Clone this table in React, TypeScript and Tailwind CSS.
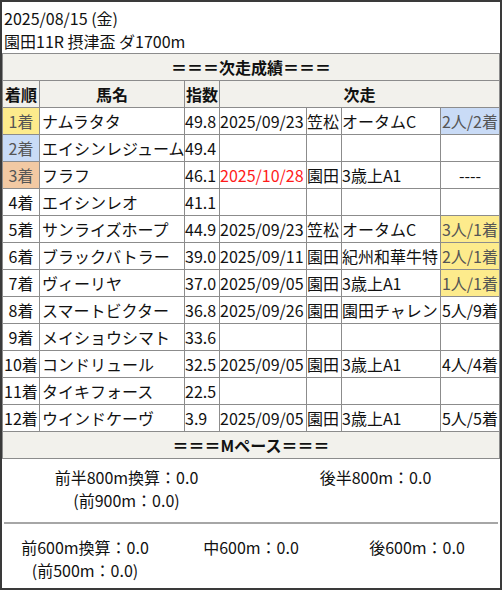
type Row = {
  rank: string;
  rankCls: string;
  name: string;
  idx: string;
  date: string;
  dateCls: string;
  place: string;
  race: string;
  res: string;
  resCls: string;
};

const rows: Row[] = [
  { rank: "1着", rankCls: "bg-[#fdeb8c] text-[#555]", name: "ナムラタタ", idx: "49.8", date: "2025/09/23", dateCls: "", place: "笠松", race: "オータムC", res: "2人/2着", resCls: "bg-[#c9dbf6] text-[#555]" },
  { rank: "2着", rankCls: "bg-[#c9dbf6] text-[#555]", name: "エイシンレジューム", idx: "49.4", date: "", dateCls: "", place: "", race: "", res: "", resCls: "" },
  { rank: "3着", rankCls: "bg-[#f2c9a3] text-[#555]", name: "フラフ", idx: "46.1", date: "2025/10/28", dateCls: "text-[#ff1a1a]", place: "園田", race: "3歳上A1", res: "----", resCls: "" },
  { rank: "4着", rankCls: "", name: "エイシンレオ", idx: "41.1", date: "", dateCls: "", place: "", race: "", res: "", resCls: "" },
  { rank: "5着", rankCls: "", name: "サンライズホープ", idx: "44.9", date: "2025/09/23", dateCls: "", place: "笠松", race: "オータムC", res: "3人/1着", resCls: "bg-[#fdeb8c] text-[#555]" },
  { rank: "6着", rankCls: "", name: "ブラックバトラー", idx: "39.0", date: "2025/09/11", dateCls: "", place: "園田", race: "紀州和華牛特", res: "2人/1着", resCls: "bg-[#fdeb8c] text-[#555]" },
  { rank: "7着", rankCls: "", name: "ヴィーリヤ", idx: "37.0", date: "2025/09/05", dateCls: "", place: "園田", race: "3歳上A1", res: "1人/1着", resCls: "bg-[#fdeb8c] text-[#555]" },
  { rank: "8着", rankCls: "", name: "スマートビクター", idx: "36.8", date: "2025/09/26", dateCls: "", place: "園田", race: "園田チャレン", res: "5人/9着", resCls: "" },
  { rank: "9着", rankCls: "", name: "メイショウシマト", idx: "33.6", date: "", dateCls: "", place: "", race: "", res: "", resCls: "" },
  { rank: "10着", rankCls: "", name: "コンドリュール", idx: "32.5", date: "2025/09/05", dateCls: "", place: "園田", race: "3歳上A1", res: "4人/4着", resCls: "" },
  { rank: "11着", rankCls: "", name: "タイキフォース", idx: "22.5", date: "", dateCls: "", place: "", race: "", res: "", resCls: "" },
  { rank: "12着", rankCls: "", name: "ウインドケーヴ", idx: "3.9", date: "2025/09/05", dateCls: "", place: "園田", race: "3歳上A1", res: "5人/5着", resCls: "" },
];

const cell = "border border-[#8c8c8c] p-0 h-[27px] leading-[26px] whitespace-nowrap overflow-hidden";

export default function App() {
  return (
    <div
      className="w-[502px] h-[590px] border-2 border-[#3a3a3a] bg-white text-[16px] text-[#111] overflow-hidden"
      style={{ fontFamily: '"Noto Sans CJK JP", "Noto Sans", sans-serif' }}
    >
      <div className="pt-[5px] pl-[2px] leading-[23px] h-[51px]">
        <div>2025/08/15 (金)</div>
        <div>園田11R 摂津盃 ダ1700m</div>
      </div>

      <table className="w-full table-fixed border-collapse">
        <colgroup>
          <col className="w-[37px]" />
          <col className="w-[145px]" />
          <col className="w-[35px]" />
          <col className="w-[87px]" />
          <col className="w-[35px]" />
          <col className="w-[99px]" />
          <col />
        </colgroup>
        <thead>
          <tr className="bg-[#f2f1ec] font-bold">
            <th colSpan={7} className={`${cell} text-center`}>＝＝＝次走成績＝＝＝</th>
          </tr>
          <tr className="bg-[#f2f1ec] font-bold">
            <th className={`${cell} text-center`}>着順</th>
            <th className={`${cell} text-center`}>馬名</th>
            <th className={`${cell} text-center`}>指数</th>
            <th colSpan={4} className={`${cell} text-center`}>次走</th>
          </tr>
        </thead>
        <tbody>
          {rows.map((r, i) => (
            <tr key={i}>
              <td className={`${cell} text-center ${r.rankCls}`}>{r.rank}</td>
              <td className={`${cell} pl-[2px]`}>{r.name}</td>
              <td className={`${cell}`}>{r.idx}</td>
              <td className={`${cell} ${r.dateCls}`}>{r.date}</td>
              <td className={`${cell}`}>{r.place}</td>
              <td className={`${cell}`}>{r.race}</td>
              <td className={`${cell} text-center ${r.resCls}`}>{r.res}</td>
            </tr>
          ))}
          <tr className="bg-[#f2f1ec] font-bold">
            <td colSpan={7} className={`${cell} text-center`}>＝＝＝Mペース＝＝＝</td>
          </tr>
        </tbody>
      </table>

      <div className="grid grid-cols-2 text-center leading-[23px] pt-[7px] pb-[10px]">
        <div>
          <div>前半800m換算：0.0</div>
          <div>(前900m：0.0)</div>
        </div>
        <div>
          <div>後半800m：0.0</div>
        </div>
      </div>
      <div className="mx-[2px] border-t-2 border-[#a6a6a6]" />
      <div className="grid grid-cols-3 text-center leading-[23px] pt-[12px]">
        <div>
          <div>前600m換算：0.0</div>
          <div>(前500m：0.0)</div>
        </div>
        <div>中600m：0.0</div>
        <div>後600m：0.0</div>
      </div>
    </div>
  );
}
